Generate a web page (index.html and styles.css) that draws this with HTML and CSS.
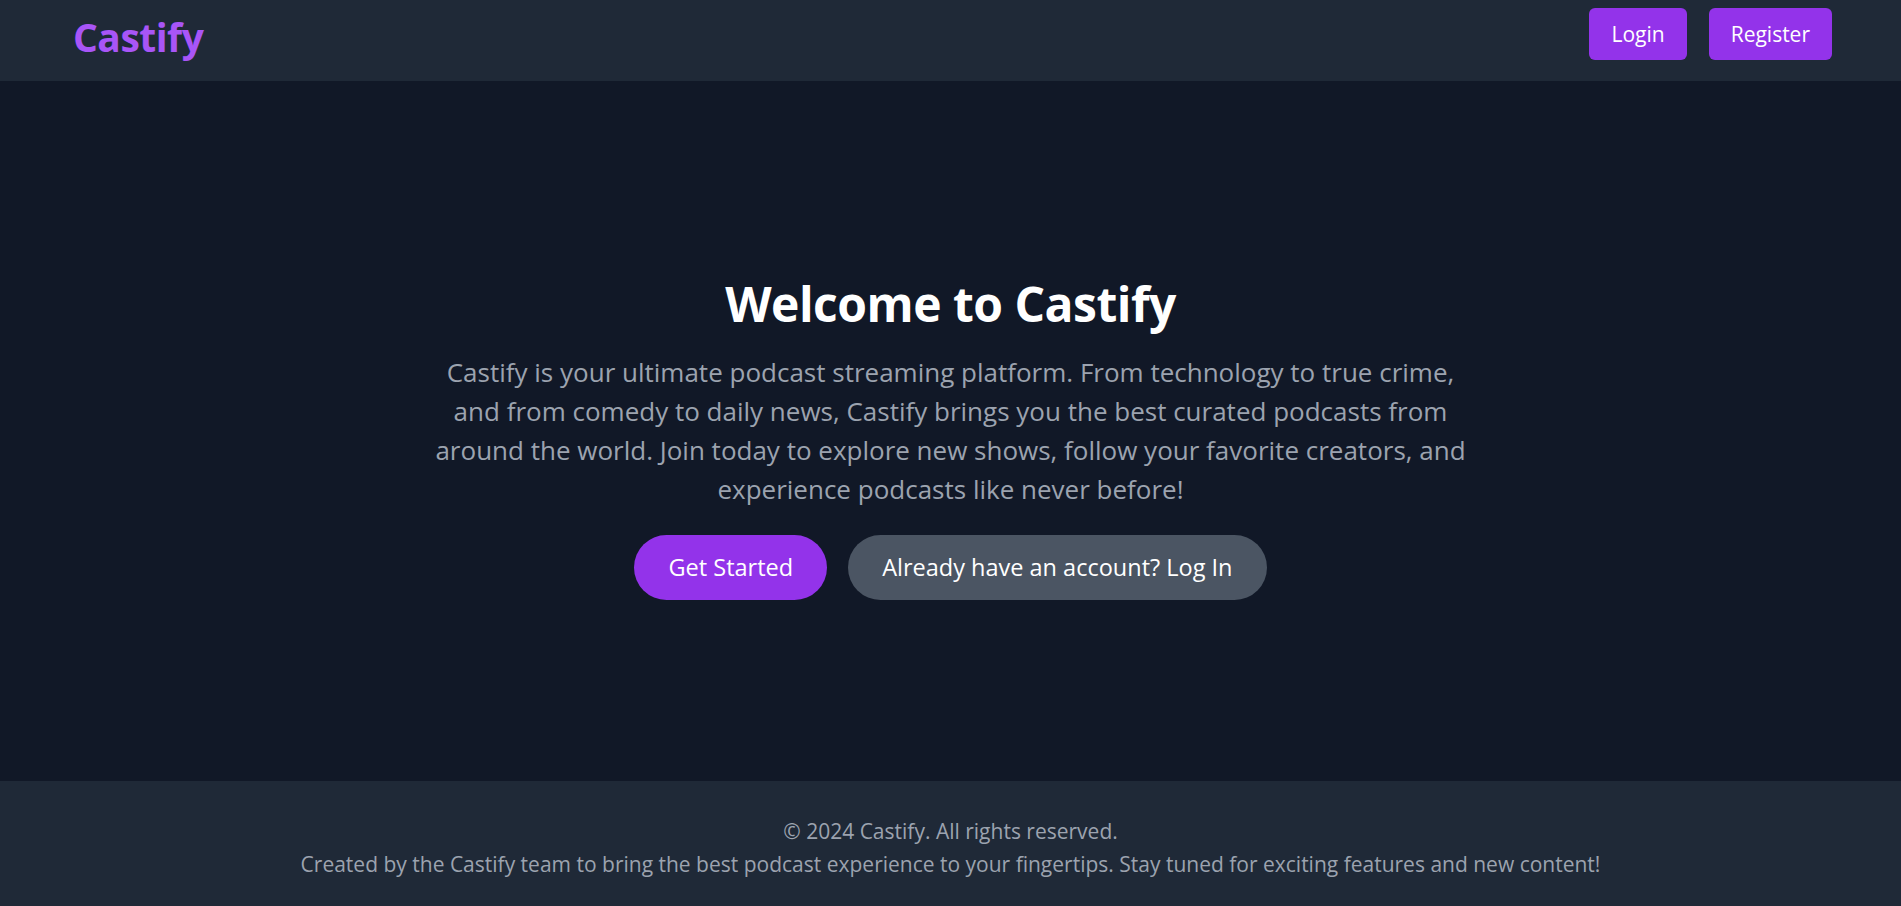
FILE: index.html
```html
<!DOCTYPE html>
<html lang="en">
<head>
<meta charset="utf-8">
<title>Castify</title>
<link rel="stylesheet" href="styles.css">
</head>
<body>
<div class="page">
  <header class="topbar">
    <div class="logo">Castify</div>
    <nav class="nav">
      <a class="nav-btn" href="#">Login</a>
      <a class="nav-btn" href="#">Register</a>
    </nav>
  </header>
  <main class="hero">
    <div class="hero-inner">
      <h1 class="hero-title">Welcome to Castify</h1>
      <p class="hero-text">Castify is your ultimate podcast streaming platform. From technology to true crime, and from comedy to daily news, Castify brings you the best curated podcasts from around the world. Join today to explore new shows, follow your favorite creators, and experience podcasts like never before!</p>
      <div class="hero-actions">
        <a class="pill pill-primary" href="#">Get Started</a>
        <a class="pill pill-secondary" href="#">Already have an account? Log In</a>
      </div>
    </div>
  </main>
  <footer class="footer">
    <p class="footer-line">© 2024 Castify. All rights reserved.</p>
    <p class="footer-line">Created by the Castify team to bring the best podcast experience to your fingertips. Stay tuned for exciting features and new content!</p>
  </footer>
</div>
</body>
</html>
```
FILE: styles.css
```css
* { box-sizing: border-box; }
html, body { margin: 0; padding: 0; }
body {
  font-family: "Open Sans", "Noto Sans", sans-serif;
  background: #111827;
  color: #fff;
}
a { text-decoration: none; color: inherit; }
.page {
  min-height: 906px;
  display: flex;
  flex-direction: column;
}
.topbar {
  height: 81px;
  background: #1f2937;
  display: flex;
  align-items: center;
  justify-content: space-between;
  padding: 0 69px 0 73px;
}
.logo {
  color: #a855f7;
  font-weight: 700;
  font-size: 39px;
  line-height: 50px;
  letter-spacing: -0.5px;
  margin-bottom: 8px;
}
.nav {
  display: flex;
  gap: 22px;
  align-self: flex-start;
  margin-top: 8px;
}
.nav-btn {
  background: #9333ea;
  color: #fff;
  font-size: 21px;
  height: 52px;
  padding: 0 22px;
  border-radius: 6px;
  display: flex;
  align-items: center;
}
.hero {
  height: 700px;
  display: flex;
  align-items: center;
  justify-content: center;
}
.hero-inner {
  display: flex;
  flex-direction: column;
  align-items: center;
  text-align: center;
  max-width: 1055px;
  margin-top: 10px;
}
.hero-title {
  margin: 0 0 18px;
  font-size: 48px;
  line-height: 62px;
  font-weight: 700;
  letter-spacing: -0.5px;
}
.hero-text {
  margin: 0 0 26px;
  font-size: 26px;
  line-height: 39px;
  color: #9ca3af;
}
.hero-actions {
  display: flex;
  gap: 21px;
}
.pill {
  height: 65px;
  display: flex;
  align-items: center;
  padding: 0 34px;
  border-radius: 999px;
  font-size: 23.5px;
  color: #fff;
}
.pill-primary { background: #9333ea; }
.pill-secondary { background: #4b5563; }
.footer {
  flex: 1;
  background: #1f2937;
  display: flex;
  flex-direction: column;
  align-items: center;
  justify-content: center;
  padding-top: 8px;
  color: #9ca3af;
  font-size: 21px;
}
.footer-line {
  margin: 0;
  line-height: 33px;
}
```
